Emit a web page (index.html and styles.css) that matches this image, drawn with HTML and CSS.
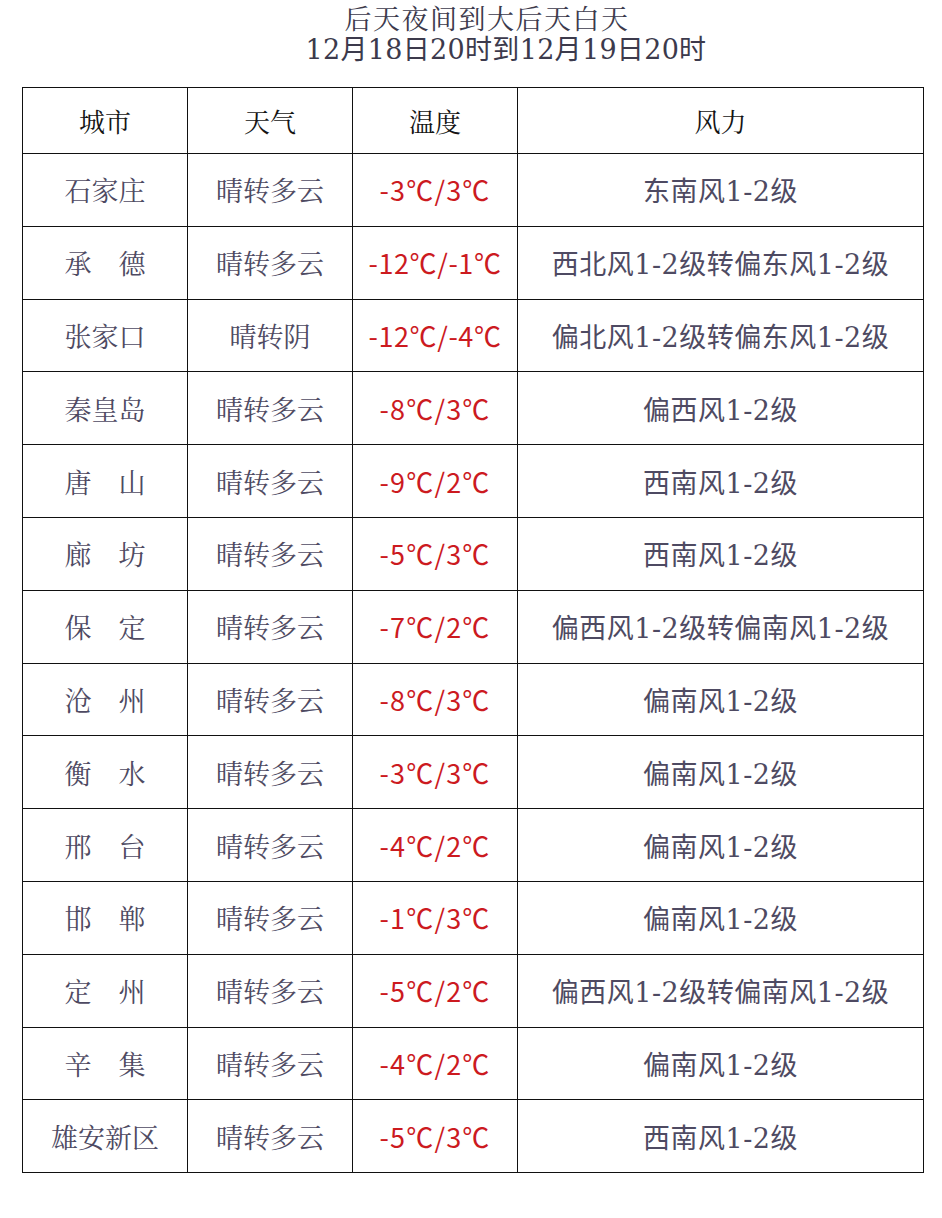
FILE: index.html
```html
<!DOCTYPE html>
<html lang="zh-CN">
<head>
<meta charset="utf-8">
<title>后天夜间到大后天白天</title>
<link rel="stylesheet" href="styles.css">
</head>
<body>
<div class="title">
  <div class="t1">后天夜间到大后天白天</div>
  <div class="t2">12月18日20时到12月19日20时</div>
</div>
<table class="wx">
  <colgroup><col class="c1"><col class="c2"><col class="c3"><col class="c4"></colgroup>
  <thead>
    <tr><th>城市</th><th>天气</th><th>温度</th><th>风力</th></tr>
  </thead>
  <tbody>
    <tr><td class="city">石家庄</td><td>晴转多云</td><td class="tmp">-3℃/3℃</td><td class="wind">东南风1-2级</td></tr>
    <tr><td class="city">承　德</td><td>晴转多云</td><td class="tmp serif">-12℃/-1℃</td><td class="wind">西北风1-2级转偏东风1-2级</td></tr>
    <tr><td class="city">张家口</td><td>晴转阴</td><td class="tmp serif">-12℃/-4℃</td><td class="wind">偏北风1-2级转偏东风1-2级</td></tr>
    <tr><td class="city">秦皇岛</td><td>晴转多云</td><td class="tmp">-8℃/3℃</td><td class="wind">偏西风1-2级</td></tr>
    <tr><td class="city">唐　山</td><td>晴转多云</td><td class="tmp">-9℃/2℃</td><td class="wind">西南风1-2级</td></tr>
    <tr><td class="city">廊　坊</td><td>晴转多云</td><td class="tmp">-5℃/3℃</td><td class="wind">西南风1-2级</td></tr>
    <tr><td class="city">保　定</td><td>晴转多云</td><td class="tmp">-7℃/2℃</td><td class="wind">偏西风1-2级转偏南风1-2级</td></tr>
    <tr><td class="city">沧　州</td><td>晴转多云</td><td class="tmp">-8℃/3℃</td><td class="wind">偏南风1-2级</td></tr>
    <tr><td class="city">衡　水</td><td>晴转多云</td><td class="tmp">-3℃/3℃</td><td class="wind">偏南风1-2级</td></tr>
    <tr><td class="city">邢　台</td><td>晴转多云</td><td class="tmp">-4℃/2℃</td><td class="wind">偏南风1-2级</td></tr>
    <tr><td class="city">邯　郸</td><td>晴转多云</td><td class="tmp">-1℃/3℃</td><td class="wind">偏南风1-2级</td></tr>
    <tr><td class="city">定　州</td><td>晴转多云</td><td class="tmp">-5℃/2℃</td><td class="wind">偏西风1-2级转偏南风1-2级</td></tr>
    <tr><td class="city">辛　集</td><td>晴转多云</td><td class="tmp">-4℃/2℃</td><td class="wind">偏南风1-2级</td></tr>
    <tr><td class="city">雄安新区</td><td>晴转多云</td><td class="tmp">-5℃/3℃</td><td class="wind">西南风1-2级</td></tr>
  </tbody>
</table>
</body>
</html>
```
FILE: styles.css
```css
html, body {
  margin: 0;
  padding: 0;
  background: #ffffff;
}
body {
  font-family: "Liberation Serif", "Noto Serif CJK SC", "Noto Sans CJK SC", serif;
  color: #4e4a62;
}
.title {
  padding-top: 6px;
  color: #3c3a4c;
  font-size: 27px;
  line-height: 29px;
  text-align: center;
}
.t1 {
  padding-left: 32px;
  letter-spacing: 1.5px;
  height: 29px;
}
.t2 {
  padding-left: 70px;
  height: 29px;
  font-family: "DejaVu Serif", "Noto Sans CJK SC", serif;
  letter-spacing: 0.3px;
}
.wx {
  margin: 23px 0 0 22px;
  width: 901px;
  border-collapse: collapse;
  table-layout: fixed;
}
.c1, .c2, .c3 { width: 165px; }
.c4 { width: 406px; }
.wx th, .wx td {
  border: 1.5px solid #111;
  text-align: center;
  vertical-align: middle;
  padding: 0;
  font-size: 27px;
  white-space: nowrap;
}
.wx th {
  height: 65px;
  color: #141414;
  font-weight: normal;
  font-size: 26px;
}
.wx td {
  height: 71.8px;
}
.city {
  padding-right: 6px;
}
.wind {
  font-family: "DejaVu Serif", "Noto Sans CJK SC", serif;
  letter-spacing: 0.5px;
}
.tmp {
  color: #cc1a1f;
  font-family: "Noto Sans CJK SC", "Liberation Sans", sans-serif;
  font-size: 26px;
  letter-spacing: 1.2px;
}
.tmp.serif {
  font-family: "Noto Sans CJK SC", "Liberation Serif", serif;
  letter-spacing: 0.6px;
}
```
